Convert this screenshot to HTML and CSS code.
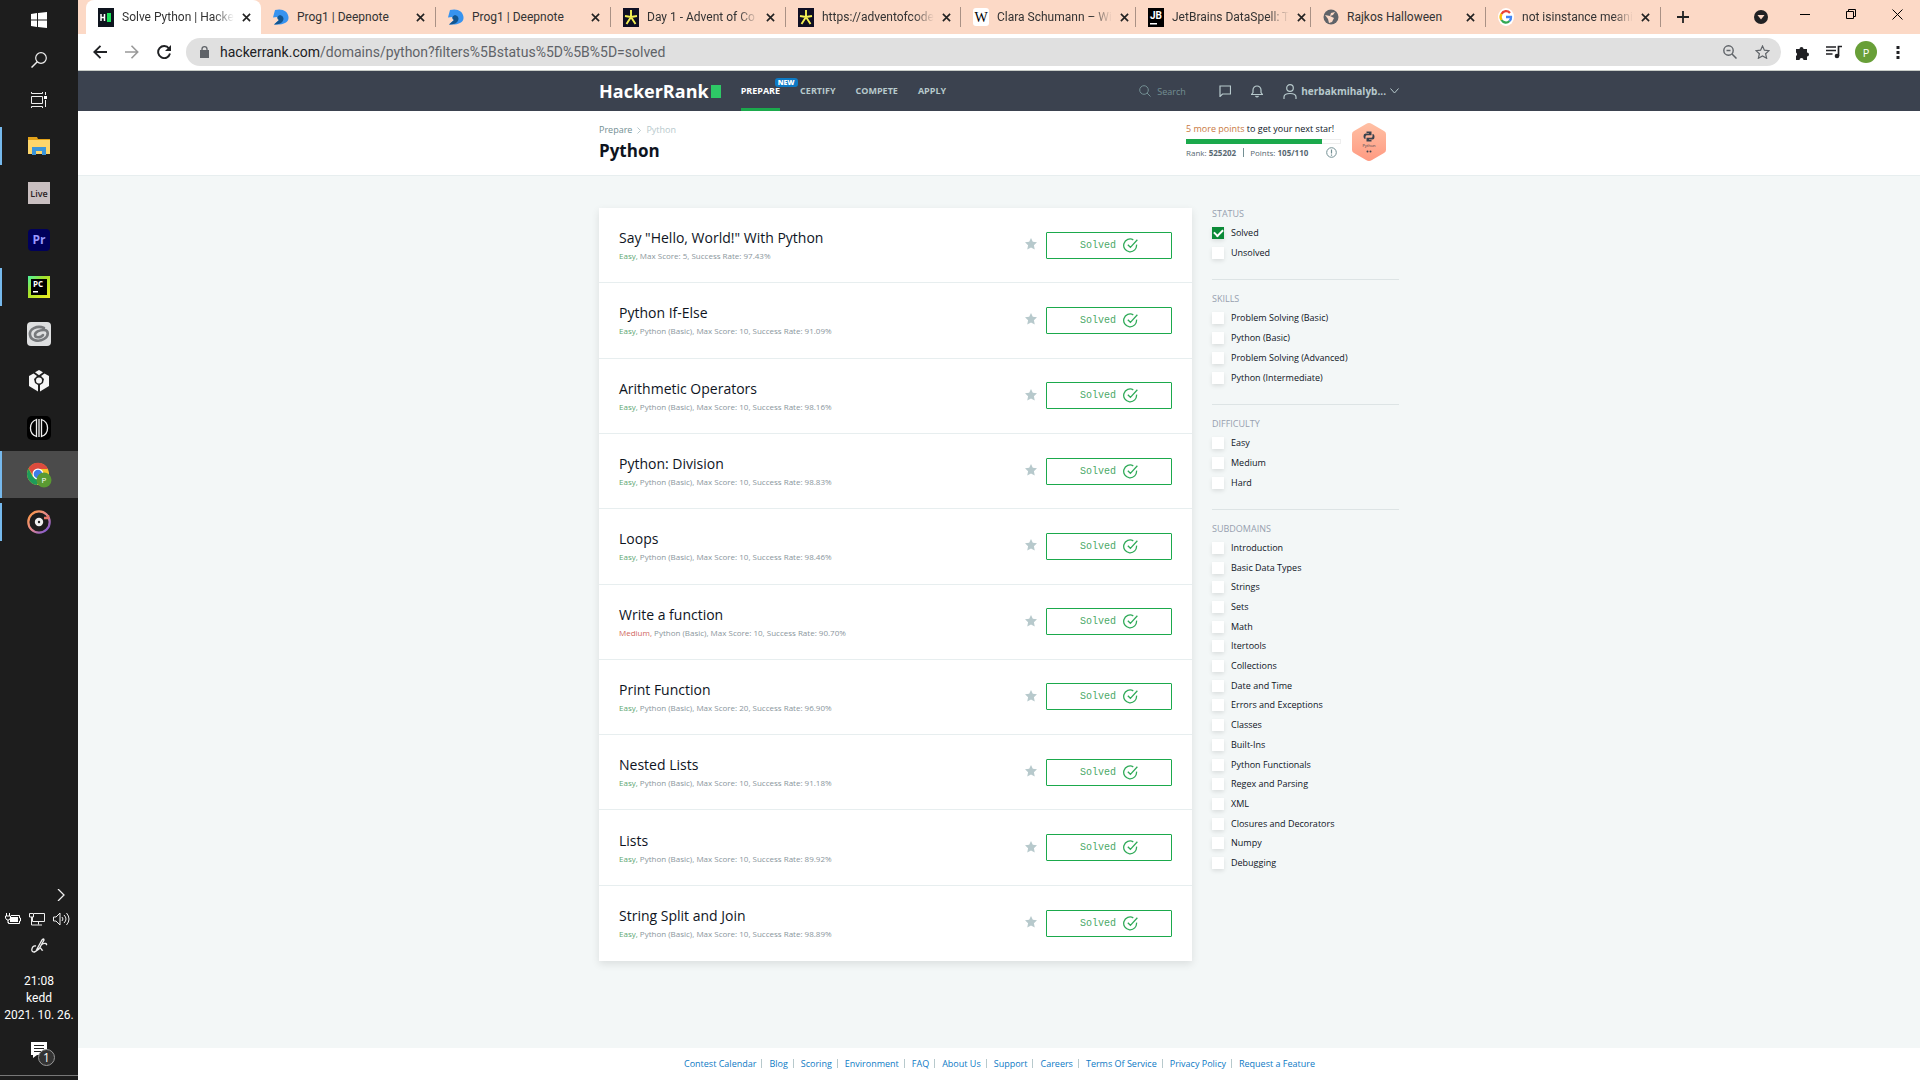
FILE: index.html
```html
<!DOCTYPE html>
<html lang="en">
<head>
<meta charset="utf-8">
<title>Solve Python | HackerRank</title>
<link rel="stylesheet" href="styles.css">
</head>
<body>
<svg class="sprite" aria-hidden="true">
  <symbol id="x" viewBox="0 0 10 10"><path d="M1 1l8 8M9 1l-8 8" stroke="#222" stroke-width="1.8"/></symbol>
  <symbol id="star" viewBox="0 0 24 24"><path d="M12 0l3.600 7.600 8.400 1-6.200 5.800 1.700 8.600L12 18.900l-7.500 4.100 1.700-8.600L0 8.600l8.400-1z" fill="#b7c9cc"/></symbol>
  <symbol id="ok" viewBox="0 0 14 14"><path d="M12.600 6.200A6 6 0 1 1 9.600 1.700M4.500 6.300l2.400 2.400L13.400 1.600" fill="none" stroke="#2faa58" stroke-width="1.200"/></symbol>
  <symbol id="deepnote" viewBox="0 0 16 16"><path d="M2 1c7-2 13 1 13.500 7S10 16 1 15.500L6 11 4 8 0 8.500z" fill="#3793ef"/><path d="M1 15.500L6 11C3.500 10 4 7 7 6c3.500 1 4.500 4 2.500 6.500S5 15.700 1 15.500z" fill="#12558f"/></symbol>
  <symbol id="advent" viewBox="0 0 16 19"><path d="M0 0h16v19H0z" fill="#0f0f23"/><path d="M8 2v7M8 9l6-1M8 9l4.500 7M8 9l-4.500 7M8 9L2 8" stroke="#f4f154" stroke-width="1.900"/></symbol>
</svg>

<div class="desktop">
  <aside class="taskbar">
    <div class="system">
      <button aria-label="Start"><svg width="16" height="16" viewBox="0 0 16 16"><path d="M0 2l6-1v6.500H0zM7 1l9-1v7.500H7zM0 8.500h6V15l-6-1zM7 8.500h9V16l-9-1z" fill="#fff"/></svg></button>
      <button aria-label="Search"><svg width="16" height="16" viewBox="0 0 16 16"><circle cx="10" cy="6" r="5.300" fill="none" stroke="#eee" stroke-width="1.200"/><path d="M6.300 9.700L.5 15.500" stroke="#eee" stroke-width="1.500"/></svg></button>
      <button aria-label="Task view"><svg width="16" height="16" viewBox="0 0 16 16"><path d="M.5 4.500h11v7H.5zM.5 0v1.500h11V0M.5 16v-1.500h11V16M14.500 0v3M14.500 8v7" fill="none" stroke="#eee"/><path d="M13 4h3v3h-3z" fill="#fff"/></svg></button>
    </div>
    <div class="apps">
      <button class="running" aria-label="File Explorer"><svg width="22" height="18" viewBox="0 0 22 18"><path d="M0 0h9l1 2h12v15H0z" fill="#e3a31a"/><path d="M0 3h22v14H0z" fill="#fdd66b"/><path d="M4 10h14v8h-4v-4H8v4H4z" fill="#3b95d9"/></svg></button>
      <button aria-label="Live"><svg width="22" height="22"><path d="M0 0h22v22H0z" fill="#c9bfc0"/><text x="11" y="15" text-anchor="middle" font-size="9" font-weight="600" fill="#2b2325">Live</text></svg></button>
      <button aria-label="Premiere"><svg width="22" height="22"><rect width="22" height="22" rx="4" fill="#00005b"/><text x="11" y="15" text-anchor="middle" font-size="12" font-weight="700" fill="#9999ff">Pr</text></svg></button>
      <button class="running" aria-label="PyCharm"><svg width="22" height="22"><defs><linearGradient id="pc" x2="1" y2="1"><stop stop-color="#4bf5a0"/><stop offset=".4" stop-color="#a4e02a"/><stop offset="1" stop-color="#f2ee20"/></linearGradient></defs><path d="M0 0h22v22H0z" fill="url(#pc)"/><path d="M3 3h16v16H3z"/><text x="10" y="11" text-anchor="middle" font-size="8" font-weight="700" fill="#fff">PC</text><path d="M5 15h5v1.500H5z" fill="#fff"/></svg></button>
      <button aria-label="Notes"><svg width="24" height="24"><rect width="24" height="24" rx="4" fill="#dedfe0"/><path d="M17 6C10 3 2 7 3 13s9 7 14 4 5-9 0-9-9 2-9 5 6 3 8 0" fill="none" stroke="#77797c" stroke-width="2.600" stroke-linecap="round"/></svg></button>
      <button aria-label="Cube"><svg width="20" height="22" viewBox="0 0 20 22"><path d="M10 0l4 2.300-4 3-4-3zM4.500 3.500L8 6 5 9l1 4 3 2v6.500L0 16V6zM15.500 3.500L12 6l3 3-1 4-3 2v6.500l9-5.500V6z" fill="#f4f4f4"/><circle cx="10" cy="10.500" r="3" fill="#f4f4f4"/></svg></button>
      <button aria-label="Studio"><svg width="24" height="24"><rect width="24" height="24" rx="5"/><path d="M9.500 3.500a9 9 0 0 0 0 17zM14.500 3.500a9 9 0 0 1 0 17zM12 3v11M12 10v11" fill="none" stroke="#eee" stroke-width="1.300"/></svg></button>
      <button class="running active" aria-label="Chrome"><svg width="26" height="26" viewBox="0 0 26 26"><circle cx="12" cy="12" r="11" fill="#f6c52c"/><path d="M2.500 6.500A11 11 0 0 1 22 7H12l-4.500 7z" fill="#dc4b3e"/><path d="M2.500 6.500A11 11 0 0 0 11 23l4-7-8-1z" fill="#1e9c5a"/><circle cx="12" cy="12" r="5.500" fill="#fff"/><circle cx="12" cy="12" r="4.300" fill="#3f7de8"/><circle cx="18" cy="18" r="7.500" fill="#5a9a32"/><text x="18" y="21" text-anchor="middle" font-size="8" fill="#fff">P</text></svg></button>
      <button class="running" aria-label="Music"><svg width="24" height="24"><defs><linearGradient id="mu" x2="1" y2="1"><stop stop-color="#ff9a3c"/><stop offset=".5" stop-color="#e58a90"/><stop offset="1" stop-color="#6a4de0"/></linearGradient></defs><circle cx="12" cy="12" r="10.700" fill="none" stroke="url(#mu)" stroke-width="2.200"/><circle cx="12" cy="12" r="4.200" fill="#eee"/><circle cx="12" cy="12" r="1.200" fill="#222"/><path d="M17 8h4V5" fill="none" stroke="#e5776a" stroke-width="2.500"/></svg></button>
    </div>
    <div class="tray">
      <button class="more" aria-label="Show hidden icons"><svg width="8" height="12"><path d="M1 0l6 6-6 6" fill="none" stroke="#eee" stroke-width="1.300"/></svg></button>
      <div class="status">
        <svg width="16" height="12"><path d="M5 4h8v5H5z" fill="#fff"/><path d="M6 2.500h8.500V5h1v3h-1v2.500h-11V9M1.500 0v3M4.500 0v3M.5 3h5v2L4 7H2L.5 5zM3 7v3" fill="none" stroke="#fff"/></svg>
        <svg width="16" height="14"><path d="M5 1.500h10.500v8H3.500V5M9.500 9.500v3M6 13h7M.5 1.500h4V5h-4zM2.500 5v8H6" fill="none" stroke="#eee"/></svg>
        <svg width="17" height="14"><path d="M.5 5H3l4-4v12L3 9H.5zM9 5q2 2 0 4M11 3q4 4 0 8M13.500 1q5 6 0 12" fill="none" stroke="#eee"/></svg>
      </div>
      <svg class="pen" width="17" height="16"><path d="M6 11l5-9q2-2 2 0L8 11l-3 2zM5 8c-4-1-6 6-2 6 3 0 4-4 6-4s1 3 3 2M10 7c4-3 7-1 5 0" fill="none" stroke="#eee" stroke-width="1.300"/></svg>
      <div class="clock"><span>21:08</span><span>kedd</span><span>2021. 10. 26.</span></div>
      <button class="notes" aria-label="1 notification"><svg width="25" height="26"><path d="M0 0h16v13H6l-4 3v-3H0z" fill="#fff"/><path d="M3 3.500h10M3 6.500h10M3 9.500h7" stroke="#222"/><circle cx="15.500" cy="15.500" r="8" fill="#333" stroke="#999"/><text x="15.500" y="20" text-anchor="middle" font-size="12" fill="#fff">1</text></svg></button>
    </div>
  </aside>

  <div class="browser">
    <div class="tabs">
      <div class="tab current"><svg width="16" height="19"><path d="M0 0h16v19H0z" fill="#0e141e"/><path d="M3 6v7M6.500 6v7M3 9.500h3.500" stroke="#fff" stroke-width="1.500"/><path d="M9 5h4v9H9z" fill="#1be35b"/></svg><span class="faded">Solve Python | Hacke</span><button aria-label="Close tab"><svg><use href="#x"/></svg></button></div>
      <div class="tab"><svg width="16" height="18"><use href="#deepnote"/></svg><span>Prog1 | Deepnote</span><button aria-label="Close tab"><svg><use href="#x"/></svg></button></div>
      <div class="tab"><svg width="16" height="18"><use href="#deepnote"/></svg><span>Prog1 | Deepnote</span><button aria-label="Close tab"><svg><use href="#x"/></svg></button></div>
      <div class="tab"><svg width="16" height="19"><use href="#advent"/></svg><span class="faded">Day 1 - Advent of Co</span><button aria-label="Close tab"><svg><use href="#x"/></svg></button></div>
      <div class="tab"><svg width="16" height="19"><use href="#advent"/></svg><span class="faded">https://adventofcode</span><button aria-label="Close tab"><svg><use href="#x"/></svg></button></div>
      <div class="tab"><svg width="16" height="18"><rect width="16" height="18" rx="3" fill="#fff"/><text class="serif" x="8" y="14" text-anchor="middle" font-size="14">W</text></svg><span class="faded">Clara Schumann – Wi</span><button aria-label="Close tab"><svg><use href="#x"/></svg></button></div>
      <div class="tab"><svg width="16" height="19"><path d="M0 0h16v19H0z"/><text x="8" y="11" text-anchor="middle" font-size="10" font-weight="700" fill="#fff">JB</text><path d="M2 15h7v1.500H2z" fill="#fff"/></svg><span class="faded">JetBrains DataSpell: T</span><button aria-label="Close tab"><svg><use href="#x"/></svg></button></div>
      <div class="tab"><svg width="16" height="16"><circle cx="8" cy="8" r="7.500" fill="#5f6368"/><path d="M2 6l5 1 1-3 4-1-2 3-3 1 4 2-2 4-3 1-1-4z" fill="#fcd9c6"/></svg><span>Rajkos Halloween</span><button aria-label="Close tab"><svg><use href="#x"/></svg></button></div>
      <div class="tab"><svg width="16" height="18" viewBox="0 0 16 18"><ellipse cx="8" cy="9" rx="8" ry="9" fill="#fff"/><g fill="none" stroke-width="2.300"><path d="M12 5A5.200 5.500 0 0 0 3.500 6" stroke="#ea4335"/><path d="M3.500 6a5.500 5.500 0 0 0 0 6" stroke="#fbbc05"/><path d="M3.500 12A5.200 5.500 0 0 0 11.500 13" stroke="#34a853"/><path d="M11.500 13A5 5 0 0 0 13 9H8" stroke="#4285f4"/></g></svg><span class="faded">not isinstance meani</span><button aria-label="Close tab"><svg><use href="#x"/></svg></button></div>
      <button class="new-tab" aria-label="New tab"><svg width="12" height="12"><path d="M6 0v12M0 6h12" stroke="#222" stroke-width="1.800"/></svg></button>
      <div class="window">
        <button aria-label="Search tabs"><svg width="14" height="14"><circle cx="7" cy="7" r="7" fill="#202124"/><path d="M3.500 5h7L7 9.500z" fill="#fcd9c6"/></svg></button>
        <button aria-label="Minimize"><svg width="10" height="10"><path d="M0 5.500h10" stroke="#000"/></svg></button>
        <button aria-label="Restore"><svg width="10" height="10"><path d="M.5 2.500h7v7h-7zM2.500 2.500v-2h7v7h-2" fill="none" stroke="#000"/></svg></button>
        <button aria-label="Close"><svg width="11" height="11"><path d="M.5.500l10 10M10.500.500l-10 10" stroke="#000"/></svg></button>
      </div>
    </div>
    <div class="toolbar">
      <button aria-label="Back"><svg width="14" height="14"><path d="M14 7H1.500M7.500.800L1.300 7l6.200 6.200" fill="none" stroke="#202124" stroke-width="1.900"/></svg></button>
      <button aria-label="Forward"><svg width="14" height="14"><path d="M0 7h12.500M6.500.800L12.700 7l-6.200 6.200" fill="none" stroke="#999" stroke-width="1.600"/></svg></button>
      <button aria-label="Reload"><svg width="14" height="14"><path d="M12 3.500A6 6 0 1 0 13 8.500" fill="none" stroke="#202124" stroke-width="1.900"/><path d="M14 0v6H8z" fill="#202124"/></svg></button>
      <div class="omnibox">
        <svg width="9" height="12"><path d="M0 4h9v8H0z" fill="#5f6368"/><path d="M2 5V3q0-2.300 2.500-2.300T7 3v2" fill="none" stroke="#5f6368" stroke-width="1.300"/></svg>
        <p class="url">hackerrank.com<span>/domains/python?filters%5Bstatus%5D%5B%5D=solved</span></p>
        <button aria-label="Zoom"><svg width="14" height="14"><circle cx="5.500" cy="5.500" r="4.700" fill="none" stroke="#5f6368" stroke-width="1.400"/><path d="M9 9l4.500 4.500M3.500 5.500h4" stroke="#5f6368" stroke-width="1.500"/></svg></button>
        <button aria-label="Bookmark"><svg width="15" height="14" viewBox="0 0 15 14"><path d="M7.500 1l1.900 4.200 4.600.5-3.400 3 1 4.500-4.100-2.300-4.100 2.300 1-4.500L1 5.700l4.600-.5z" fill="none" stroke="#5f6368" stroke-width="1.200"/></svg></button>
      </div>
      <button aria-label="Extensions"><svg width="15" height="15"><path d="M1 4h3.500a2 2 0 1 1 4 0H12v3.500a2 2 0 1 1 0 4V15H8.500a2 2 0 0 0-4 0H1v-4a2 2 0 0 0 0-3.500z" fill="#202124"/></svg></button>
      <button aria-label="Media"><svg width="16" height="14"><path d="M0 2h10M0 5.500h10M0 9h6.500M12.500 11V1.500H16" fill="none" stroke="#202124" stroke-width="1.700"/><circle cx="11" cy="11" r="2.300" fill="#202124"/></svg></button>
      <button class="avatar" aria-label="Profile">P</button>
      <button aria-label="Menu"><svg width="4" height="14"><path d="M.5 1h3v3h-3zM.5 6h3v3h-3zM.5 11h3v3h-3z" fill="#202124"/></svg></button>
    </div>

    <div class="page">
      <nav class="topnav">
        <div class="container">
          <a class="logo" href="#">HackerRank<i></i></a>
          <a class="on" href="#">PREPARE<b>NEW</b></a>
          <a href="#">CERTIFY</a>
          <a href="#">COMPETE</a>
          <a href="#">APPLY</a>
          <label class="search"><svg width="12" height="12"><circle cx="5" cy="5" r="4.300" fill="none" stroke="#738f93"/><path d="M8 8l3.500 3.500" stroke="#738f93"/></svg><input type="text" placeholder="Search" aria-label="Search"></label>
          <button aria-label="Messages"><svg width="12" height="12"><path d="M1 11.500V1h10.500v8H3.500z" fill="none" stroke="#b7c9cc" stroke-width="1.200"/></svg></button>
          <button aria-label="Notifications"><svg width="12" height="13"><path d="M.5 9.500h11L10 7.500V5a4 4 0 0 0-8 0v2.500zM4.500 11q1.500 1.800 3 0" fill="none" stroke="#b7c9cc" stroke-width="1.200"/></svg></button>
          <button class="user"><svg width="14" height="15"><circle cx="7" cy="4" r="3.300" fill="none" stroke="#b7c9cc" stroke-width="1.200"/><path d="M1 15v-2q0-3.500 6-3.500t6 3.500v2" fill="none" stroke="#b7c9cc" stroke-width="1.200"/></svg><span>herbakmihalyb...</span><svg width="9" height="6"><path d="M.5.500l4 4.500 4-4.500" fill="none" stroke="#b7c9cc"/></svg></button>
        </div>
      </nav>
      <header class="heading">
        <div class="container">
          <div class="title">
            <div class="crumbs"><a href="#">Prepare</a><svg width="4" height="7"><path d="M.5.500l3 3-3 3" fill="none" stroke="#b7c9cc"/></svg><span>Python</span></div>
            <h1>Python</h1>
          </div>
          <div class="progress">
            <p class="next"><em>5 more points</em> to get your next star!</p>
            <div class="bar"><i></i></div>
            <p class="rank"><span>Rank: <b>525202</b></span><span class="points">Points: <b>105/110</b></span><svg width="11" height="11"><circle cx="5.500" cy="5.500" r="4.800" fill="none" stroke="#738f93"/><path d="M5.500 2.500v4M5.500 7.500v1.200" stroke="#738f93" stroke-width="1.200"/></svg></p>
          </div>
          <svg class="badge" width="34" height="38" viewBox="0 0 34 38"><defs><linearGradient id="bd" x2="0" y2="1"><stop stop-color="#ffc0a4"/><stop offset="1" stop-color="#ff9a82"/></linearGradient></defs><path d="M17 0q1.500 0 3 1l12 7q2 1 2 3v16q0 2-2 3l-12 7q-3 2-6 0L2 30q-2-1-2-3V11q0-2 2-3l12-7q1.500-1 3-1z" fill="url(#bd)"/><path d="M14.500 8.500h5v3.800h-4.700q-1.300 0-1.300 1.500V16q-2 0-2-3 0-2.500 2-2.500h3.500V10h-2.500zM19.500 18.500h-5v-3.800h4.700q1.300 0 1.300-1.500V11q2 0 2 3 0 2.500-2 2.500H17v.5h2.500z" fill="#39424e"/><text x="17" y="24" text-anchor="middle" font-size="4" fill="#39424e">Python</text><circle cx="15.500" cy="28.500" r="1" fill="#39424e"/><circle cx="18.500" cy="28.500" r="1" fill="#39424e"/></svg>
        </div>
      </header>

      <main class="container content">
        <div class="challenges">
          <article><div><h2>Say "Hello, World!" With Python</h2><p><em class="easy">Easy,</em> Max Score: 5, Success Rate: 97.43%</p></div><svg class="fav"><use href="#star"/></svg><button>Solved<svg><use href="#ok"/></svg></button></article>
          <article><div><h2>Python If-Else</h2><p><em class="easy">Easy,</em> Python (Basic), Max Score: 10, Success Rate: 91.09%</p></div><svg class="fav"><use href="#star"/></svg><button>Solved<svg><use href="#ok"/></svg></button></article>
          <article><div><h2>Arithmetic Operators</h2><p><em class="easy">Easy,</em> Python (Basic), Max Score: 10, Success Rate: 98.16%</p></div><svg class="fav"><use href="#star"/></svg><button>Solved<svg><use href="#ok"/></svg></button></article>
          <article><div><h2>Python: Division</h2><p><em class="easy">Easy,</em> Python (Basic), Max Score: 10, Success Rate: 98.83%</p></div><svg class="fav"><use href="#star"/></svg><button>Solved<svg><use href="#ok"/></svg></button></article>
          <article><div><h2>Loops</h2><p><em class="easy">Easy,</em> Python (Basic), Max Score: 10, Success Rate: 98.46%</p></div><svg class="fav"><use href="#star"/></svg><button>Solved<svg><use href="#ok"/></svg></button></article>
          <article><div><h2>Write a function</h2><p><em class="medium">Medium,</em> Python (Basic), Max Score: 10, Success Rate: 90.70%</p></div><svg class="fav"><use href="#star"/></svg><button>Solved<svg><use href="#ok"/></svg></button></article>
          <article><div><h2>Print Function</h2><p><em class="easy">Easy,</em> Python (Basic), Max Score: 20, Success Rate: 96.90%</p></div><svg class="fav"><use href="#star"/></svg><button>Solved<svg><use href="#ok"/></svg></button></article>
          <article><div><h2>Nested Lists</h2><p><em class="easy">Easy,</em> Python (Basic), Max Score: 10, Success Rate: 91.18%</p></div><svg class="fav"><use href="#star"/></svg><button>Solved<svg><use href="#ok"/></svg></button></article>
          <article><div><h2>Lists</h2><p><em class="easy">Easy,</em> Python (Basic), Max Score: 10, Success Rate: 89.92%</p></div><svg class="fav"><use href="#star"/></svg><button>Solved<svg><use href="#ok"/></svg></button></article>
          <article><div><h2>String Split and Join</h2><p><em class="easy">Easy,</em> Python (Basic), Max Score: 10, Success Rate: 98.89%</p></div><svg class="fav"><use href="#star"/></svg><button>Solved<svg><use href="#ok"/></svg></button></article>
        </div>
        <form class="filters">
          <fieldset><legend>STATUS</legend><div class="options">
            <label><input type="checkbox" checked>Solved</label>
            <label><input type="checkbox">Unsolved</label></div>
          </fieldset>
          <fieldset><legend>SKILLS</legend><div class="options">
            <label><input type="checkbox">Problem Solving (Basic)</label>
            <label><input type="checkbox">Python (Basic)</label>
            <label><input type="checkbox">Problem Solving (Advanced)</label>
            <label><input type="checkbox">Python (Intermediate)</label></div>
          </fieldset>
          <fieldset><legend>DIFFICULTY</legend><div class="options">
            <label><input type="checkbox">Easy</label>
            <label><input type="checkbox">Medium</label>
            <label><input type="checkbox">Hard</label></div>
          </fieldset>
          <fieldset><legend>SUBDOMAINS</legend><div class="options long">
            <label><input type="checkbox">Introduction</label>
            <label><input type="checkbox">Basic Data Types</label>
            <label><input type="checkbox">Strings</label>
            <label><input type="checkbox">Sets</label>
            <label><input type="checkbox">Math</label>
            <label><input type="checkbox">Itertools</label>
            <label><input type="checkbox">Collections</label>
            <label><input type="checkbox">Date and Time</label>
            <label><input type="checkbox">Errors and Exceptions</label>
            <label><input type="checkbox">Classes</label>
            <label><input type="checkbox">Built-Ins</label>
            <label><input type="checkbox">Python Functionals</label>
            <label><input type="checkbox">Regex and Parsing</label>
            <label><input type="checkbox">XML</label>
            <label><input type="checkbox">Closures and Decorators</label>
            <label><input type="checkbox">Numpy</label>
            <label><input type="checkbox">Debugging</label></div>
          </fieldset>
        </form>
      </main>
      <footer>
        <a href="#">Contest Calendar</a><a href="#">Blog</a><a href="#">Scoring</a><a href="#">Environment</a><a href="#">FAQ</a><a href="#">About Us</a><a href="#">Support</a><a href="#">Careers</a><a href="#">Terms Of Service</a><a href="#">Privacy Policy</a><a href="#">Request a Feature</a>
      </footer>
    </div>
  </div>
</div>
</body>
</html>
```
FILE: styles.css
```css
* { box-sizing: border-box; }
body { margin: 0; font-family: "Open Sans", "Noto Sans", sans-serif; color: #0e141e; }
h1, h2, p, fieldset { margin: 0; padding: 0; border: 0; }
button { padding: 0; border: 0; background: none; font: inherit; color: inherit; display: flex; align-items: center; justify-content: center; }
svg { display: block; flex: none; }
a { text-decoration: none; }
em { font-style: normal; }
.sprite { width: 0; height: 0; position: absolute; }
.serif { font-family: "Liberation Serif", serif; }

.desktop { display: grid; grid-template-columns: 78px 1fr; min-height: 100vh; }

/* Windows taskbar */
.taskbar { display: flex; flex-direction: column; background: #1d1d1d; color: #fff; }
.system button { width: 100%; height: 40px; }
.apps { padding-top: 2px; }
.apps button { width: 100%; height: 47px; }
.running { background: linear-gradient(#76b9ed, #76b9ed) left center / 2px 38px no-repeat; }
.apps .active { background: linear-gradient(90deg, #76b9ed 2px, #4b4b4b 2px); }
.tray { display: flex; flex-direction: column; align-items: center; margin-top: auto; padding-bottom: 4px; }
.more { align-self: flex-end; width: 34px; height: 24px; }
.status { display: flex; align-items: center; justify-content: center; gap: 8px; width: 100%; height: 24px; padding-right: 4px; }
.pen { margin: 7px 0; }
.clock { display: flex; flex-direction: column; align-items: center; padding: 12px 0 15px; font: 12px/17px Roboto, sans-serif; white-space: nowrap; }
.notes { width: 100%; height: 37px; padding: 0 0 4px 8px; border-bottom: 1px solid #777; }

/* Browser frame */
.browser { display: flex; flex-direction: column; min-width: 0; }
.tabs { display: flex; height: 34px; padding-left: 8px; background: #fcd9c6; }
.tab { display: flex; align-items: center; gap: 8px; flex: 0 1 175px; min-width: 0; padding: 0 11px 0 12px; font: 12px Roboto, sans-serif; color: #333; background: linear-gradient(#a99185, #a99185) right center / 1px 20px no-repeat; }
.tab.current { background: #fff; border-radius: 8px 8px 0 0; }
.tab span { flex: 1; white-space: nowrap; }
.tab .faded { mask-image: linear-gradient(90deg, #000 82%, transparent); }
.tab button svg { width: 9px; height: 9px; }
.new-tab { width: 44px; }
.window { display: flex; margin-left: auto; height: 28px; }
.window button { width: 46px; }
.window button:first-child { padding: 6px 0 0 4px; }
.toolbar { display: flex; align-items: center; height: 37px; padding: 0 6px; background: #fff; border-bottom: 1px solid #c8ccc8; }
.toolbar > button { width: 32px; height: 32px; }
.omnibox { display: flex; align-items: center; flex: 1; height: 28px; margin: 0 5px 0 6px; padding: 0 3px 0 14px; border-radius: 14px; background: #e0e0e0; }
.omnibox button { width: 32px; height: 28px; }
.url { flex: 1; padding-left: 11px; font: 14px Roboto, sans-serif; color: #202124; }
.url span { color: #5f6368; }
.toolbar > .avatar { width: 22px; height: 22px; margin: 0 5px; border-radius: 50%; background: #689f38; color: #fff; font-size: 11px; }

/* Site */
.page { display: flex; flex-direction: column; flex: 1; background: #f3f7f7; }
.container { display: flex; width: 100%; max-width: 800px; margin: 0 auto; }
.topnav { background: #3b424f; }
.topnav .container { height: 40px; align-items: center; gap: 20px; }
.topnav a { display: flex; align-items: center; position: relative; height: 40px; padding-bottom: 2px; font-size: 9px; font-weight: 700; color: #b7c9cc; }
.topnav .logo { gap: 2px; padding: 0; font-size: 18px; color: #fff; }
.logo i { width: 10px; height: 13px; background: #2ec866; }
.topnav .on { color: #fff; box-shadow: inset 0 -3px #1ba94c; }
.on b { position: absolute; top: 7px; left: 34px; padding: 0 3px; border-radius: 3px; background: #0d7ac5; color: #fff; font-size: 7px; line-height: 9px; }
.search { display: flex; align-items: center; gap: 6px; margin-left: auto; }
.search input { width: 42px; padding: 0; border: 0; background: none; font: 9px "Open Sans", sans-serif; color: #fff; }
.search input::placeholder { color: #738f93; }
.topnav button { font-size: 10px; font-weight: 700; color: #b7c9cc; }
.user { gap: 4px; }
.heading { background: #fff; border-bottom: 1px solid #e7eeef; }
.heading .container { height: 64px; padding-right: 13px; }
.title { flex: 1; padding-top: 13px; }
.crumbs { display: flex; align-items: center; gap: 5px; font-size: 9px; line-height: 12px; color: #b7c9cc; }
.crumbs a { color: #738f93; }
h1 { padding-top: 3px; font-size: 17px; line-height: 24px; }
.progress { width: 155px; padding-top: 12px; }
.next { font-size: 9px; line-height: 12px; white-space: nowrap; }
.next em { color: #c9793f; }
.bar { height: 5px; margin: 4px 0 2px; border: 1px solid #eee; }
.bar i { display: block; width: 89%; height: 5px; margin: -1px; background: #1ba94c; }
.rank { display: flex; align-items: center; font-size: 8px; line-height: 13px; color: #576871; }
.points { margin-left: 7px; padding-left: 7px; background: linear-gradient(#738f93, #738f93) left center / 1px 9px no-repeat; }
.rank svg { margin: 0 4px 0 auto; }
.badge { margin: 12px 0 0 11px; }

.content { align-items: flex-start; gap: 20px; padding: 32px 0 72px; }
.challenges { display: grid; grid-auto-rows: 1fr; flex: 1; min-height: 753px; background: #fff; box-shadow: 0 3px 8px rgba(0, 0, 0, .1); }
article { display: flex; align-items: center; padding: 0 20px; border-bottom: 1px solid #e7eeef; }
article:last-child { border-bottom: 0; }
article div { flex: 1; }
h2 { font-size: 14px; line-height: 20px; font-weight: 400; }
article p { padding-top: 2px; font-size: 8px; line-height: 12px; color: #8a969c; }
.easy { color: #5ea672; }
.medium { color: #d0675c; }
.fav { width: 12px; height: 12px; margin: 0 9px 2px 0; }
article button { gap: 7px; width: 126px; height: 27px; border: 1px solid #1ba94c; border-radius: 1px; font: 10px "Liberation Mono", monospace; color: #4aa866; }
article button svg { width: 15px; height: 15px; }

.filters { width: 187px; font-size: 9px; line-height: 12px; }
fieldset { min-width: 0; padding-bottom: 17px; margin-bottom: 13px; border-bottom: 1px solid #dde4e5; }
fieldset:last-child { border: 0; margin: 0; padding: 0; }
legend { padding: 0; color: #979faf; }
.options { display: grid; grid-auto-rows: 1fr; row-gap: 1px; padding-top: 3px; }
.options label { display: flex; align-items: center; gap: 7px; height: 19px; }
.options.long { row-gap: 0; min-height: 338px; }
.options.long label { height: auto; }
.options input { appearance: none; display: grid; place-items: center; width: 12px; height: 12px; margin: 0; background: #fff; box-shadow: 0 2px 4px rgba(0, 0, 0, .1); }
.options input:checked { background: #0b8a37; }
.options input:checked::after { content: ""; width: 7px; height: 4px; margin-bottom: 2px; border: solid #fff; border-width: 0 0 2px 2px; transform: rotate(-45deg); }

footer { display: flex; align-items: center; justify-content: center; height: 32px; margin-top: auto; padding-bottom: 2px; background: #fff; font-size: 9px; }
footer a { padding: 0 6px 0 7px; color: #0d7ac5; background: linear-gradient(#b7c9cc, #b7c9cc) right center / 1px 9px no-repeat; }
footer a:last-child { background: none; }
```
